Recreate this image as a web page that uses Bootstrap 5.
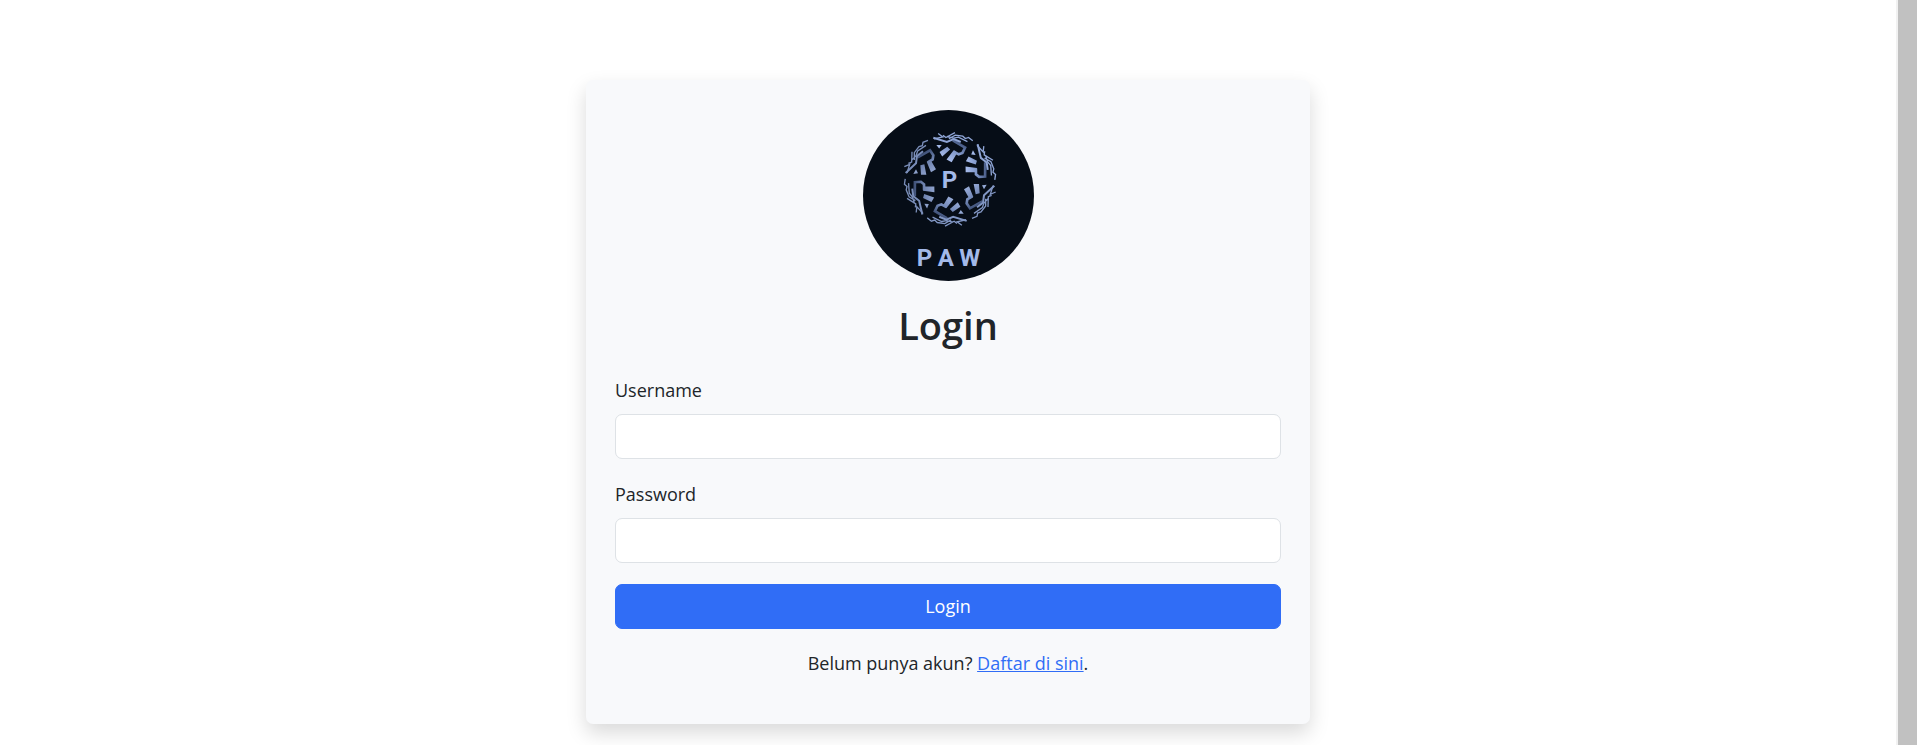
<!DOCTYPE html>
<html lang="id">
<head>
<meta charset="utf-8">
<meta name="viewport" content="width=device-width, initial-scale=1">
<title>Login</title>
<link href="https://cdn.jsdelivr.net/npm/bootstrap@5.3.0/dist/css/bootstrap.min.css" rel="stylesheet">
<style>
  body { font-family: "Open Sans", "Noto Sans", sans-serif; font-size: 18px; line-height: 29px; background: #fff; color: #212529; }
  .page-area { padding-top: 80px; }
  .login-wrap { max-width: 1504px; --bs-gutter-x: 28px; }
  .login-wrap > .row { --bs-gutter-x: 28px; }
  .login-card { background: #f8f9fb; border-radius: 7px; padding: 30px 29px 26px; border: 0; box-shadow: 0 9px 20px rgba(0,0,0,.15); }
  .login-logo { width: 171px; height: 171px; }
  .login-title { font-size: 38px; line-height: 48px; font-weight: 600; margin: 20px 0 27px; }
  .field { margin-bottom: 21px; }
  .field .form-label { display: block; margin-bottom: 9px; }
  .field .form-control { height: 45px; border-radius: 7px; border-color: #dee2e6; font-size: 18px; }
  .login-btn { height: 45px; padding: 0; border-radius: 7px; font-size: 18px; --bs-btn-bg: #306df6; --bs-btn-border-color: #306df6; }
  .signup { margin: 20px 0; }
  .signup a { color: #306df6; }
  .scroll-track { width: 21px; background: #c1c1c1; border-left: 2px solid #f1f1f1; }
</style>
</head>
<body>
<div class="d-flex min-vh-100">
  <main class="page-area flex-grow-1">
    <div class="container-fluid login-wrap">
      <div class="row justify-content-center">
        <div class="col-md-6">
          <div class="card login-card">
            <svg class="login-logo d-block mx-auto" viewBox="36 30 513 513" role="img" aria-label="PAW">
              <defs>
                <linearGradient id="steel" gradientUnits="userSpaceOnUse" x1="252" y1="215" x2="212" y2="150">
                  <stop offset="0" stop-color="#adc2f2"/><stop offset=".5" stop-color="#7f96c8"/><stop offset="1" stop-color="#34466e"/>
                </linearGradient>
                <g id="shard">
                  <path fill="#a3b9e9" d="M195 208l6 12-14 2z"/>
                  <path fill="url(#steel)" d="M208 196l12-3 6 31h-16zM227 185l12-5 16 28-15 9z"/>
                  <path fill="none" stroke="url(#steel)" stroke-width="8" d="M200 172l37-21 10 15-2 12-15 9"/>
                  <path fill="none" stroke="#8fa5d6" stroke-width="6" d="M164 219l31-29 3-22 18-14"/>
                  <path fill="none" stroke="#8fa5d6" stroke-width="4" d="M160 200l16-7-8 26M172 190l10-4 1-31M190 180v-22l14-18 10-3 2-10 15-6M181 182l14-15 5-14 25-17"/>
                </g>
              </defs>
              <circle cx="292.500" cy="286.500" r="256.500" fill="#060d17"/>
              <use href="#shard" opacity=".85"/>
              <use href="#shard" transform="rotate(60 297 238)"/>
              <use href="#shard" transform="rotate(120 297 238)"/>
              <use href="#shard" transform="rotate(180 297 238)" opacity=".9"/>
              <use href="#shard" transform="rotate(240 297 238)" opacity=".9"/>
              <use href="#shard" transform="rotate(300 297 238)" opacity=".85"/>
              <g fill="#a3b9e9" font-family="Roboto, sans-serif" font-weight="700" font-size="72">
                <text x="272" y="264">P</text>
                <text x="197 260 325" y="499">PAW</text>
              </g>
            </svg>
            <h2 class="login-title text-center">Login</h2>
            <form>
              <div class="field">
                <label class="form-label" for="username">Username</label>
                <input type="text" class="form-control" id="username" name="username">
              </div>
              <div class="field">
                <label class="form-label" for="password">Password</label>
                <input type="password" class="form-control" id="password" name="password">
              </div>
              <button type="submit" class="btn btn-primary login-btn w-100 d-block">Login</button>
            </form>
            <p class="signup text-center">Belum punya akun? <a href="#">Daftar di sini</a>.</p>
          </div>
        </div>
      </div>
    </div>
  </main>
  <div class="scroll-track flex-shrink-0" aria-hidden="true"></div>
</div>
<script src="https://cdn.jsdelivr.net/npm/bootstrap@5.3.0/dist/js/bootstrap.bundle.min.js"></script>
</body>
</html>
